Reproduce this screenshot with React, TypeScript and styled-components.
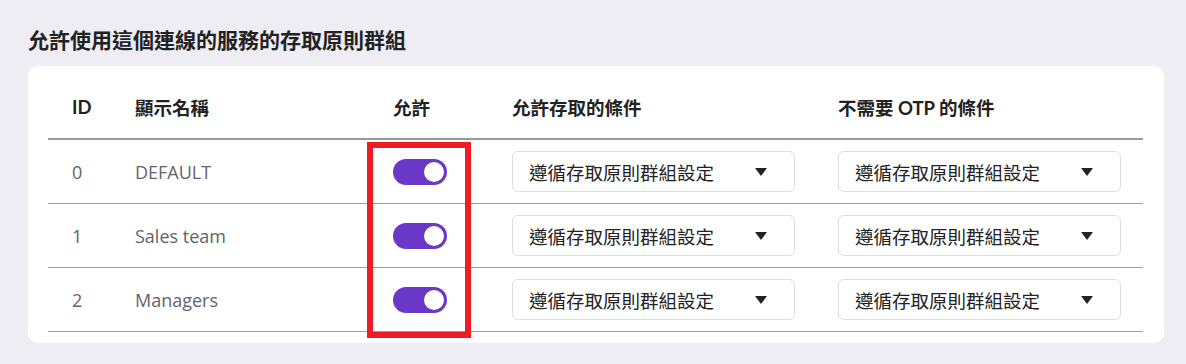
import React from "react";
import styled, { createGlobalStyle } from "styled-components";

const Global = createGlobalStyle`
  html, body { margin: 0; padding: 0; background: #eeedf3; }
  body { font-family: Lato, "Noto Sans CJK TC", sans-serif; color: #222; }
`;

const Page = styled.div`
  padding: 26px 22px 0 28px;
  width: 1186px;
  box-sizing: border-box;
`;

const Title = styled.h2`
  margin: 0 0 12px 0;
  font-size: 21px;
  line-height: 28px;
  font-weight: 700;
  color: #222;
  font-family: Lato, "Noto Sans CJK TC", sans-serif;
`;

const Card = styled.div`
  background: #fff;
  border-radius: 10px;
  padding: 10px 21px 11px 20px;
  width: 1136px;
  box-sizing: border-box;
`;

const Table = styled.div`
  position: relative;
  display: grid;
  grid-template-columns: 63px 258px 119px 326px 329px;
`;

const HeadCell = styled.div`
  height: 62px;
  border-bottom: 2px solid #999;
  display: flex;
  align-items: center;
  padding-left: 24px;
  font-size: 18.5px;
  font-weight: 700;
  color: #222;
`;

const Cell = styled.div`
  height: 63px;
  border-bottom: 1px solid #9c9c9c;
  display: flex;
  align-items: center;
  padding-left: 24px;
  font-family: "Open Sans", "Noto Sans CJK TC", sans-serif;
  font-size: 18px;
  color: #63636b;
`;

const Toggle = styled.div<{ $on: boolean }>`
  width: 54px;
  height: 26px;
  border-radius: 13px;
  background: ${(p) => (p.$on ? "#6a38c8" : "#ccc")};
  display: flex;
  align-items: center;
  justify-content: ${(p) => (p.$on ? "flex-end" : "flex-start")};
  padding: 0 3px;
  box-sizing: border-box;
`;

const Knob = styled.span`
  width: 20px;
  height: 20px;
  border-radius: 50%;
  background: #fff;
`;

const Select = styled.div`
  width: 283px;
  height: 41px;
  box-sizing: border-box;
  border: 1px solid #dedede;
  border-radius: 6px;
  display: flex;
  align-items: center;
  justify-content: space-between;
  padding: 0 27px 0 16px;
  font-family: Lato, "Noto Sans CJK TC", sans-serif;
  font-size: 18.5px;
  color: #222;
`;

const Highlight = styled.div`
  position: absolute;
  left: 319px;
  top: 66px;
  width: 104px;
  height: 196px;
  border: 6px solid #ee1c25;
  box-sizing: border-box;
  pointer-events: none;
`;

const Caret = () => (
  <svg width="12" height="8" viewBox="0 0 12 8">
    <polygon points="0,0 12,0 6,8" fill="#222" />
  </svg>
);

const rows = [
  { id: 0, name: "DEFAULT" },
  { id: 1, name: "Sales team" },
  { id: 2, name: "Managers" },
];

const SelectBox = () => (
  <Select>
    <span>遵循存取原則群組設定</span>
    <Caret />
  </Select>
);

export default function App() {
  return (
    <>
      <Global />
      <Page>
        <Title>允許使用這個連線的服務的存取原則群組</Title>
        <Card>
          <Table>
            <HeadCell>ID</HeadCell>
            <HeadCell>顯示名稱</HeadCell>
            <HeadCell>允許</HeadCell>
            <HeadCell>允許存取的條件</HeadCell>
            <HeadCell>不需要 OTP 的條件</HeadCell>
            {rows.map((r) => (
              <React.Fragment key={r.id}>
                <Cell>{r.id}</Cell>
                <Cell>{r.name}</Cell>
                <Cell>
                  <Toggle $on>
                    <Knob />
                  </Toggle>
                </Cell>
                <Cell>
                  <SelectBox />
                </Cell>
                <Cell>
                  <SelectBox />
                </Cell>
              </React.Fragment>
            ))}
            <Highlight />
          </Table>
        </Card>
      </Page>
    </>
  );
}
